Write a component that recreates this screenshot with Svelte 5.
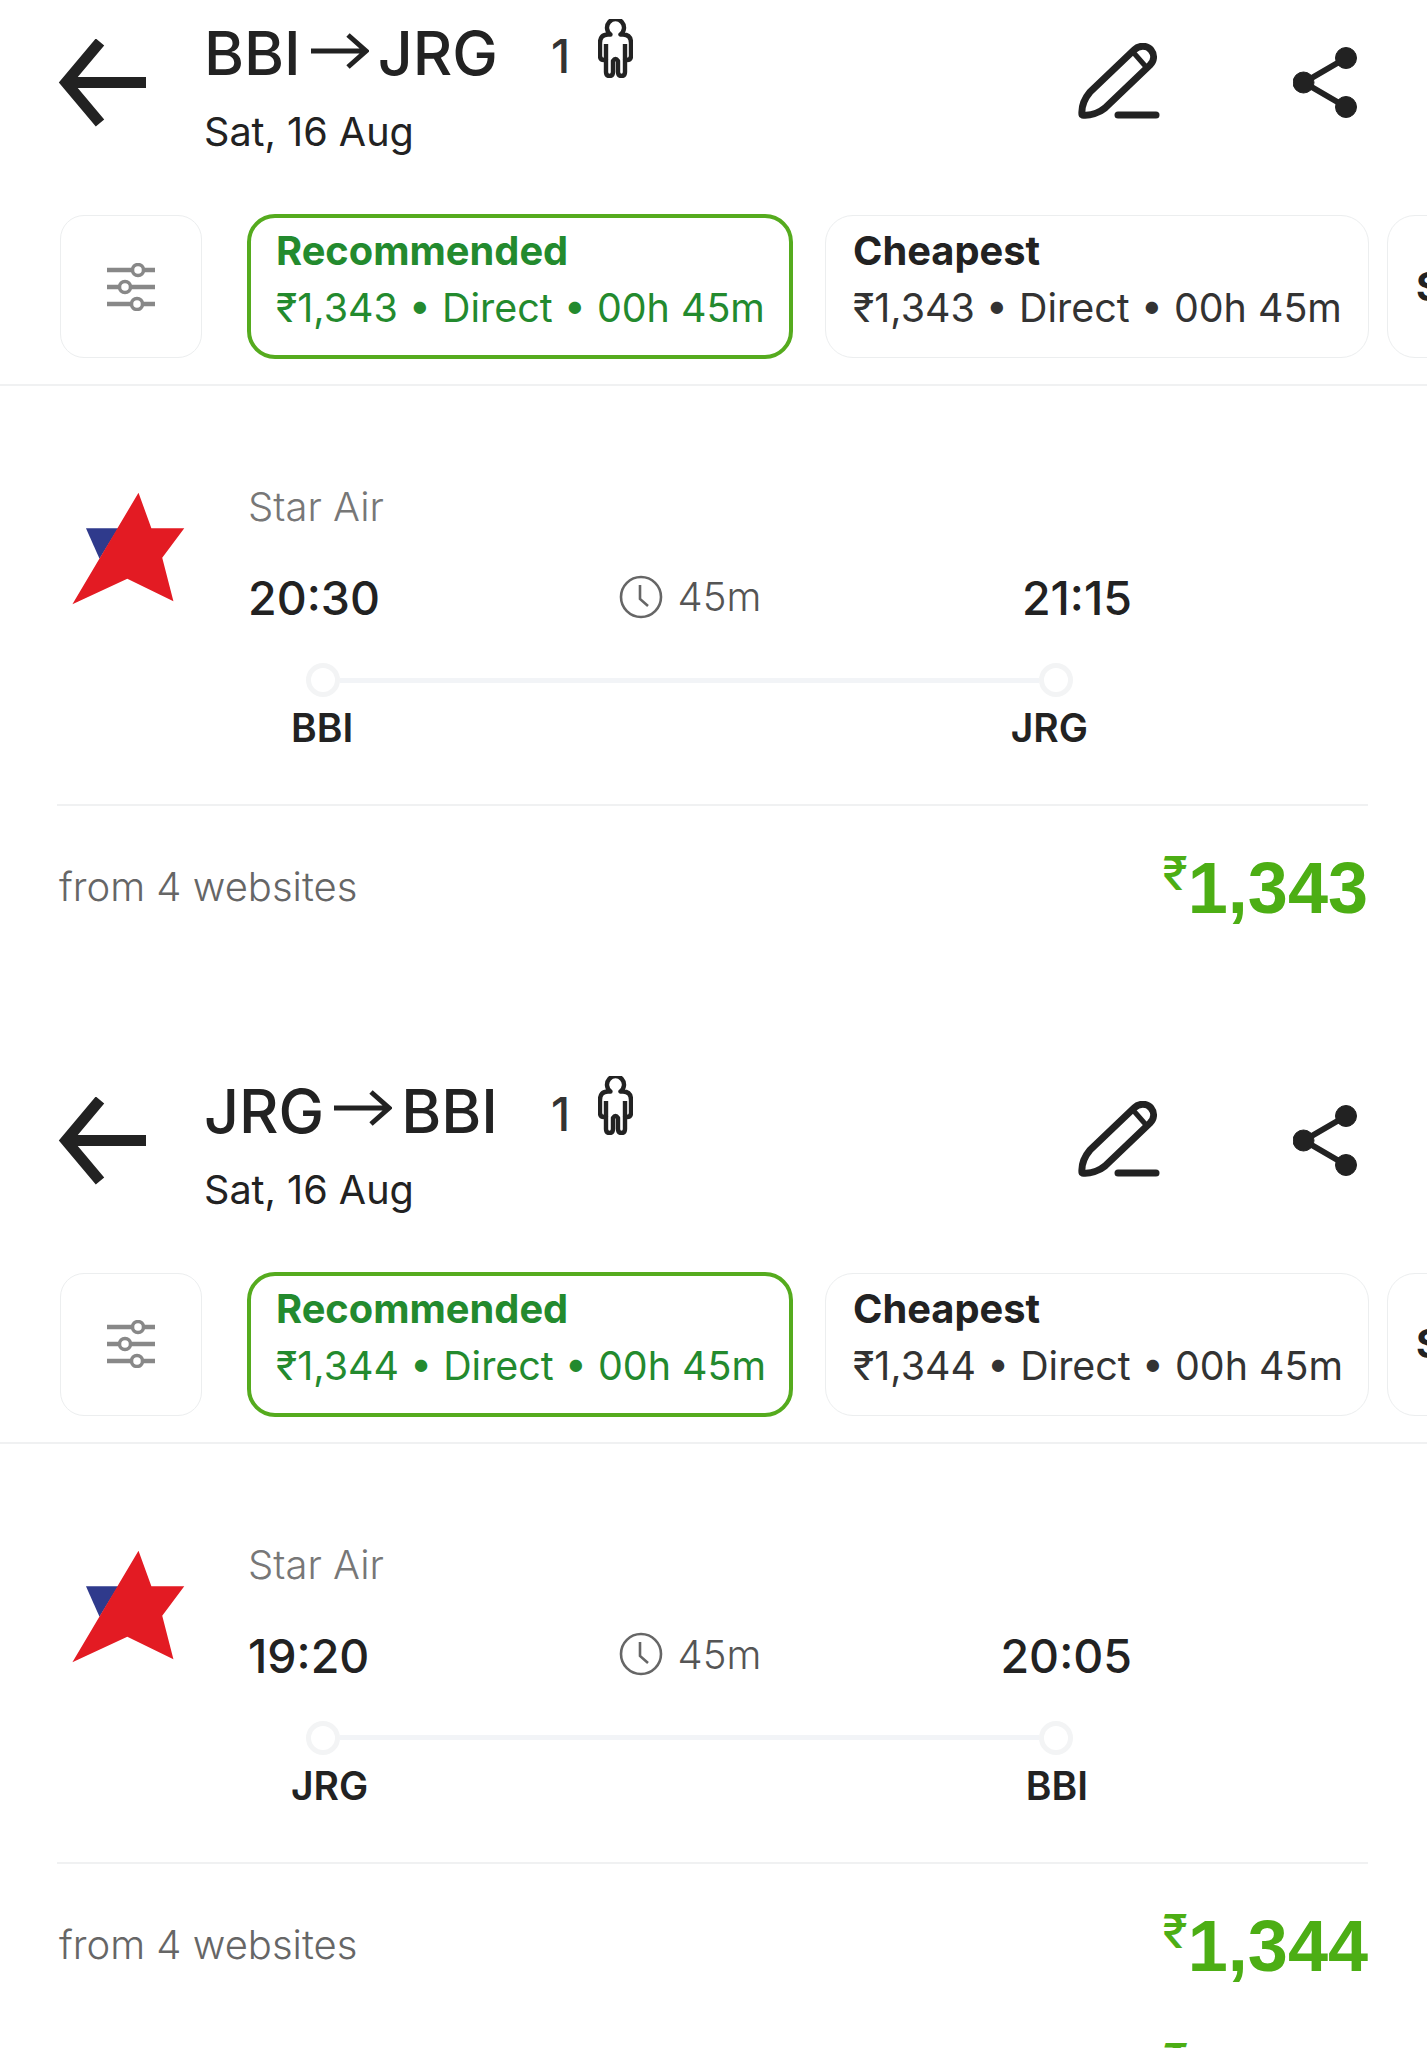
<script>
    const trips = [
        { from: "BBI", to: "JRG", price: "1,343", dep: "20:30", arr: "21:15" },
        { from: "JRG", to: "BBI", price: "1,344", dep: "19:20", arr: "20:05" }
    ];
</script>

<div class="page">
    {#each trips as t}
    <section class="trip">
        <header class="top">
            <svg class="back" width="88" height="88" viewBox="0 0 88 88" fill="none" stroke="#222" stroke-width="11">
                <path d="M88 43.5H10M42 3L8 43.5L42 84" />
            </svg>
            <div class="route">
                <div class="title">
                    <span>{t.from}</span>
                    <svg class="arrow" width="58" height="36" viewBox="0 0 58 36" fill="none" stroke="#222" stroke-width="5">
                        <path d="M0 18H54M37 2L55 18L37 34" />
                    </svg>
                    <span>{t.to}</span>
                    <span class="count">1</span>
                    <svg class="person" width="35" height="59" viewBox="0 0 35 59" fill="none" stroke="#222" stroke-width="4.4" stroke-linejoin="round">
                        <path d="M12.5 15.5A8.5 8.5 0 1 1 22.5 15.5H25Q33 15.5 33 24V37Q33 41 29 41H27V53Q27 57 23.5 57Q20 57 20 53V42Q17.5 38 15 42V53Q15 57 11.5 57Q8 57 8 53V41H6Q2 41 2 37V24Q2 15.5 10 15.5Z" />
                        <path d="M8 25V41M27 25V41" />
                    </svg>
                </div>
                <div class="date">Sat, 16 Aug</div>
            </div>
            <svg class="pencil" width="82" height="76" viewBox="0 0 82 76" fill="none" stroke="#222" stroke-width="7" stroke-linejoin="round">
                <path d="M4 72C3 62 7 55 12 49L56 7C61 2 69 2 73 7C77 12 76 18 72 22L27 65C21 70 12 73 4 72Z" />
                <path d="M55 9L69 25" stroke-width="5" />
                <path d="M40 72H78" stroke-width="7" stroke-linecap="round" />
            </svg>
            <svg class="share" width="64" height="71" viewBox="0 0 64 71" fill="#222" stroke="#222">
                <path d="M53 11L11 35.5L53 60" fill="none" stroke-width="6" />
                <circle cx="53" cy="11" r="10.5" />
                <circle cx="10.5" cy="35.5" r="10.5" />
                <circle cx="53" cy="60" r="10.5" />
            </svg>
        </header>

        <div class="chips">
            <div class="filter">
                <svg width="48" height="48" viewBox="0 0 48 48" fill="none" stroke="#888" stroke-width="4.5">
                    <path d="M0 7H25M37 7H48M0 24H12M24 24H48M0 41H24M36 41H48" />
                    <circle cx="31" cy="7" r="5.5" stroke-width="3.5" />
                    <circle cx="18" cy="24" r="5.5" stroke-width="3.5" />
                    <circle cx="30" cy="41" r="5.5" stroke-width="3.5" />
                </svg>
            </div>
            <div class="chip active">
                <b>Recommended</b>
                <span>₹{t.price} • Direct • 00h 45m</span>
            </div>
            <div class="chip">
                <b>Cheapest</b>
                <span>₹{t.price} • Direct • 00h 45m</span>
            </div>
            <div class="chip last"><b>S</b></div>
        </div>

        <div class="flight">
            <svg class="logo" width="119" height="117" viewBox="60 35 351 345">
                <path d="M110 148H205L150 238Z" fill="#2f3a8c" />
                <path d="M265 43L303 148H400L335 235L368 363L232 297L70 372Z" fill="#e31b23" />
            </svg>
            <div class="info">
                <div class="airline">Star Air</div>
                <div class="times">
                    <div class="time">{t.dep}</div>
                    <div class="duration">
                        <svg width="44" height="44" viewBox="0 0 44 44" fill="none" stroke="#666" stroke-width="2.6">
                            <circle cx="22" cy="22" r="20" />
                            <path d="M21 10V24L29 31" />
                        </svg>
                        <span>45m</span>
                    </div>
                    <div class="time end">{t.arr}</div>
                </div>
                <div class="track">
                    <i class="dot"></i>
                    <i class="line"></i>
                    <i class="dot"></i>
                </div>
                <div class="codes">
                    <span>{t.from}</span>
                    <span>{t.to}</span>
                </div>
            </div>
        </div>

        <div class="bottom">
            <span class="sites">from 4 websites</span>
            <span class="price"><small>₹</small>{t.price}</span>
        </div>
    </section>
    {/each}
    <div class="peek">₹</div>
</div>

<style>
:global(body) {
    margin: 0;
    background: #fff;
}

.page {
    height: 2048px;
    overflow: hidden;
    font-family: Inter, "Noto Sans", sans-serif;
    color: #222;
    background: #fff;
}

.trip {
    height: 1057.5px;
}

.trip:last-of-type {
    height: auto;
}

.top {
    height: 214px;
    box-sizing: border-box;
    padding: 20px 0 0 58px;
    display: flex;
    align-items: flex-start;
}

.back {
    margin-top: 19px;
    flex: none;
}

.route {
    margin-left: 58px;
    width: 874px;
    flex: none;
}

.title {
    display: flex;
    align-items: center;
    height: 66px;
    font-size: 61px;
    line-height: 66px;
    font-weight: 450;
}

.arrow {
    margin: 0 9px 5px 10px;
}

.count {
    font-size: 46px;
    margin-left: 53px;
    margin-top: 6px;
    color: #333;
}

.person {
    margin: -10px 0 0 28px;
}

.date {
    margin-top: 21px;
    font-size: 39.6px;
    line-height: 50px;
}

.pencil {
    margin: 23px 0 0 0;
    flex: none;
}

.share {
    margin: 27px 0 0 133px;
    flex: none;
}

.chips {
    height: 172px;
    box-sizing: border-box;
    display: flex;
    align-items: flex-start;
    padding-left: 60px;
    border-bottom: 2px solid #f0f1f2;
    overflow: hidden;
}

.filter {
    width: 142px;
    height: 143px;
    box-sizing: border-box;
    margin-top: 1px;
    border: 1.5px solid #eceeef;
    border-radius: 24px;
    display: flex;
    align-items: center;
    justify-content: center;
    flex: none;
}

.chip {
    width: 544px;
    height: 143px;
    box-sizing: border-box;
    margin: 1px 0 0 18px;
    padding: 10px 0 0 27px;
    border: 1.5px solid #eceeef;
    border-radius: 28px;
    display: flex;
    flex-direction: column;
    flex: none;
}

.chip b {
    font-size: 39.8px;
    line-height: 50px;
    font-weight: 700;
}

.chip span {
    margin-top: 7px;
    font-size: 39.4px;
    line-height: 50px;
    white-space: nowrap;
    color: #333;
}

.chip.active {
    width: 546px;
    height: 145px;
    margin: 0 14px 0 45px;
    padding: 8px 0 0 25px;
    border: 4px solid #55ab1e;
    color: #238a2e;
}

.chip.active span {
    margin-top: 7px;
    color: #238a2e;
}

.chip.last {
    padding-left: 28px;
    justify-content: center;
    padding-top: 0;
}

.flight {
    display: flex;
    padding-left: 57px;
}

.logo {
    margin: 104px 0 0 12px;
    flex: none;
}

.info {
    width: 884px;
    margin-left: 60px;
    padding-top: 96px;
    flex: none;
}

.airline {
    font-size: 40px;
    line-height: 50px;
    font-weight: 300;
    color: #777;
}

.times {
    margin-top: 36px;
    display: grid;
    grid-template-columns: 1fr auto 1fr;
    align-items: center;
    height: 60px;
}

.time {
    font-size: 46.5px;
    line-height: 60px;
    font-weight: 450;
    color: #222;
}

.time.end {
    justify-self: end;
}

.duration {
    display: flex;
    align-items: center;
    gap: 15px;
    margin-top: -3px;
    font-size: 40px;
    font-weight: 300;
    color: #555;
}

.track {
    margin: 35px 0 0 58px;
    width: 767px;
    height: 34px;
    display: flex;
    align-items: center;
}

.dot {
    width: 34px;
    height: 34px;
    box-sizing: border-box;
    border: 5px solid #f3f4f5;
    border-radius: 50%;
    flex: none;
}

.line {
    flex: 1;
    height: 5px;
    background: #f2f4f7;
}

.codes {
    margin: 9px 0 0 43px;
    width: 797px;
    display: flex;
    justify-content: space-between;
    font-size: 39px;
    line-height: 44px;
    font-weight: 600;
}

.bottom {
    margin: 54px 0 0 57px;
    width: 1311px;
    height: 173px;
    box-sizing: border-box;
    border-top: 2px solid #f0f1f2;
    display: flex;
    justify-content: space-between;
    align-items: flex-start;
}

.sites {
    margin: 56px 0 0 2px;
    font-size: 40px;
    line-height: 50px;
    font-weight: 300;
    color: #666;
}

.price {
    margin-top: 42px;
    font-family: "Liberation Sans", Arial, sans-serif;
    font-size: 72px;
    line-height: 80px;
    font-weight: 700;
    color: #4cae14;
    display: flex;
    align-items: flex-start;
}

.price small {
    font-family: Inter, sans-serif;
    font-size: 46px;
    line-height: 50px;
    font-weight: 500;
}

.peek {
    padding: 0 0 0 1163px;
    font-size: 46px;
    line-height: 50px;
    font-weight: 500;
    color: #4cae14;
}
</style>
